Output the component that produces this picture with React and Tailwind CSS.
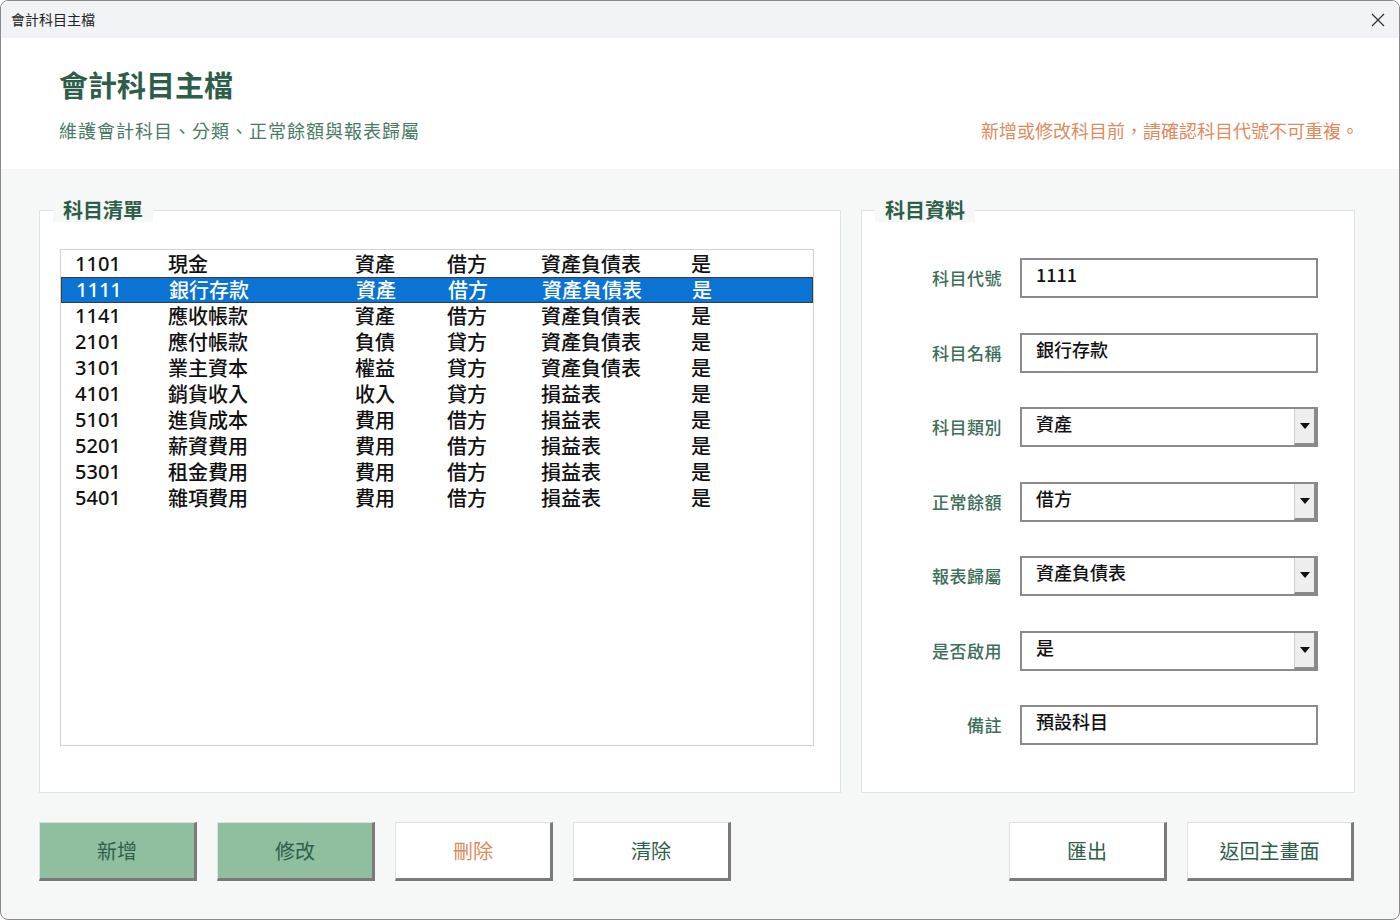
const F = { fontFamily: '"Noto Sans CJK TC", "Noto Sans", sans-serif' };
const rows = [
  ["1101","現金","資產","借方","資產負債表","是"],
  ["1111","銀行存款","資產","借方","資產負債表","是"],
  ["1141","應收帳款","資產","借方","資產負債表","是"],
  ["2101","應付帳款","負債","貸方","資產負債表","是"],
  ["3101","業主資本","權益","貸方","資產負債表","是"],
  ["4101","銷貨收入","收入","貸方","損益表","是"],
  ["5101","進貨成本","費用","借方","損益表","是"],
  ["5201","薪資費用","費用","借方","損益表","是"],
  ["5301","租金費用","費用","借方","損益表","是"],
  ["5401","雜項費用","費用","借方","損益表","是"],
];
const fields = [["科目代號","1111",false],["科目名稱","銀行存款",false],["科目類別","資產",true],["正常餘額","借方",true],["報表歸屬","資產負債表",true],["是否啟用","是",true],["備註","預設科目",false]];
function Btn({ children, green, orange, w = "w-[158px]" }) {
  return (
    <div className={`${w} h-[59px] flex items-center justify-center text-[20px] border border-t-[#e0e0e0] border-l-[#e0e0e0] border-r-[3px] border-b-[3px] border-r-[#7a7a7a] border-b-[#7a7a7a] ${green ? "bg-[#8fbf9f]" : "bg-white"} ${orange ? "text-[#e08a5c]" : "text-[#2e5e4a]"}`}>{children}</div>
  );
}
export default function App() {
  return (
    <div style={F} className="w-[1400px] h-[920px] bg-white">
      <div className="w-[1400px] h-[920px] border border-[#8a8a8a] rounded-lg overflow-hidden flex flex-col bg-[#f6f8f7]">
        <div className="h-[37px] bg-[#f1f3f6] flex items-center justify-between pl-[10px] pr-[14px]">
          <span className="text-[14px] text-[#222]">會計科目主檔</span>
          <svg width="14" height="14" viewBox="0 0 14 14"><path d="M1 1L13 13M13 1L1 13" stroke="#333" strokeWidth="1.3"/></svg>
        </div>
        <div className="h-[131px] bg-white pl-[58px] pr-[40px] pt-[26px]">
          <div className="text-[29px] font-bold text-[#2e5e4a] leading-[40px]">會計科目主檔</div>
          <div className="flex justify-between mt-[14px] text-[18px] leading-[24px]">
            <span className="text-[#4a7a66] tracking-[1px]">維護會計科目、分類、正常餘額與報表歸屬</span>
            <span className="text-[#e08a5c] tracking-[0px]">新增或修改科目前，請確認科目代號不可重複。</span>
          </div>
        </div>
        <div className="flex gap-[20px] pl-[38px] pt-[29px]">
          <div className="relative w-[802px] h-[595px] pt-[12px]">
            <div className="h-full bg-white border border-[#dfe3e1] pt-[38px] pl-[20px]">
              <div className="w-[754px] h-[497px] border border-[#cfd3d1] bg-white pt-[1px]">
                {rows.map((r, i) => (
                  <div key={i} className={`h-[26px] flex items-center text-[20px] font-medium leading-[26px] ${i === 1 ? "bg-[#0a73d4] text-white border border-[#3b3b3b]" : "text-[#111]"}`}>
                    <span className="w-[107px] pl-[14px]" style={{fontFamily:'"Noto Sans", sans-serif', fontSize:20, fontWeight:500}}>{r[0]}</span>
                    <span className="w-[187px]">{r[1]}</span>
                    <span className="w-[92px]">{r[2]}</span>
                    <span className="w-[94px]">{r[3]}</span>
                    <span className="w-[150px]">{r[4]}</span>
                    <span>{r[5]}</span>
                  </div>
                ))}
              </div>
            </div>
            <div className="absolute left-[14px] top-0 px-[10px] bg-[#f6f8f7] text-[20px] font-bold text-[#2e5e4a] leading-[24px]">科目清單</div>
          </div>
          <div className="relative w-[494px] h-[595px] pt-[12px]">
            <div className="h-full bg-white border border-[#dfe3e1] pt-[47px] flex flex-col gap-[34.5px]">
              {fields.map(([l, v, dd]) => (
                <div key={l} className="flex items-center h-[40px]">
                  <span className="w-[140px] text-right text-[17px] font-medium text-[#3d6e5a] tracking-[0.5px]">{l}</span>
                  <div className="ml-[18px] w-[298px] h-[40px] border-2 border-[#8a8a8a] flex bg-white">
                    <span className="flex-1 pl-[14px] pt-[1px] text-[18px] font-medium text-[#111] leading-[26px]">{v}</span>
                    {dd && <div className="w-[22px] bg-[#eeeeee] border-l border-[#cfcfcf] border-r-2 border-b-2 border-r-[#8a8a8a] border-b-[#8a8a8a] flex items-center justify-center"><svg width="10" height="6" viewBox="0 0 10 6"><path d="M0 0H10L5 6Z" fill="#111"/></svg></div>}
                  </div>
                </div>
              ))}
            </div>
            <div className="absolute left-[14px] top-0 px-[10px] bg-[#f6f8f7] text-[20px] font-bold text-[#2e5e4a] leading-[24px]">科目資料</div>
          </div>
        </div>
        <div className="flex pl-[38px] pr-[45px] mt-[29px]">
          <div className="flex gap-[20px]">
            <Btn green>新增</Btn><Btn green>修改</Btn><Btn orange>刪除</Btn><Btn>清除</Btn>
          </div>
          <div className="flex gap-[20px] ml-auto">
            <Btn>匯出</Btn><Btn w="w-[167px]">返回主畫面</Btn>
          </div>
        </div>
      </div>
    </div>
  );
}
